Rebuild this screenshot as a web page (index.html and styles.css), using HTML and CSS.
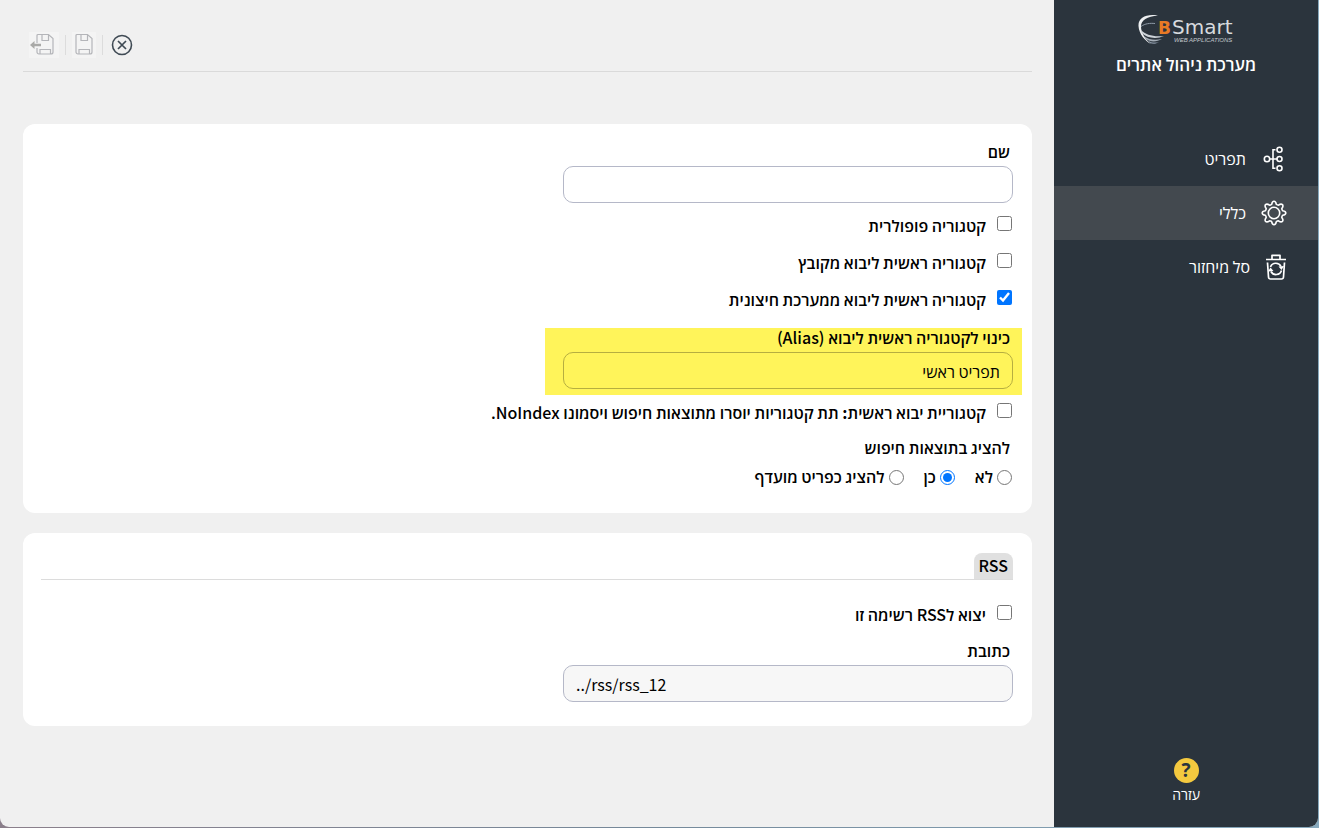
FILE: index.html
```
<!DOCTYPE html>
<html lang="he" dir="rtl">
<head>
<meta charset="utf-8">
<title>מערכת ניהול אתרים</title>
<link rel="stylesheet" href="styles.css">
</head>
<body>
<div class="window">
  <aside class="sidebar">
    <header class="brand">
      <svg class="logo" width="98" height="34" viewBox="0 0 98 34" role="img" aria-label="BSmart Web Applications">
        <path d="M21 1.500C9-.5 1 4 1.500 12 2 20 8 27 14 30 7 24 4 18 4 12.500 4 6 10 2.500 21 1.500z" fill="#eef0f2"/>
        <path d="M4 12.500c4-3 9-3.500 14-3" fill="none" stroke="#8f9ba8" stroke-width="1"/>
        <path d="M4 16c5 5 12 7 23 6-8 3.500-17 2-22.500-3z" fill="#cdd3d9"/>
        <path d="M7 22c5 4 11 4.500 18 3-6 3.500-12 3-16 0z" fill="#a5aeb8"/>
        <path d="M11 26.500c4 2.500 7 2.500 11 1.500-4 2.500-7 2-9 1z" fill="#8a96a5"/>
        <text class="logo-b" x="21" y="20">B</text>
        <text class="logo-name" x="35" y="20">Smart</text>
        <text class="logo-sub" x="37" y="28">WEB APPLICATIONS</text>
      </svg>
      <h1 class="title">מערכת ניהול אתרים</h1>
    </header>
    <nav class="nav">
      <a class="nav-item" href="#menu">
        <svg width="26" height="26" viewBox="0 0 26 26" fill="none" stroke="#fff" stroke-width="1.6"><circle cx="6" cy="13" r="2.700"/><circle cx="18.500" cy="3.700" r="2.500"/><circle cx="18.500" cy="13" r="2.500"/><circle cx="18.500" cy="22.300" r="2.500"/><path d="M8.700 13H16M14.500 3.700H12v18.600h2.500"/></svg>
        <span>תפריט</span>
      </a>
      <a class="nav-item active" href="#general">
        <svg width="26" height="26" viewBox="0 0 26 26" fill="none" stroke="#fff" stroke-width="1.6" stroke-linejoin="round"><circle cx="13" cy="13" r="5.700"/><path d="M13 1.200Q14.800 1.200 15.300 4.300Q16.200 5.200 17.500 5.200Q20 3.300 21.400 4.600Q22.700 6 20.800 8.500Q20.800 9.800 21.700 10.700Q24.800 11.200 24.800 13Q24.800 14.800 21.700 15.300Q20.800 16.200 20.800 17.500Q22.700 20 21.400 21.400Q20 22.700 17.500 20.800Q16.200 20.800 15.300 21.700Q14.800 24.800 13 24.800Q11.200 24.800 10.700 21.700Q9.800 20.800 8.500 20.800Q6 22.700 4.600 21.400Q3.300 20 5.200 17.500Q5.200 16.200 4.300 15.300Q1.200 14.800 1.200 13Q1.200 11.200 4.300 10.700Q5.200 9.800 5.200 8.500Q3.300 6 4.600 4.600Q6 3.300 8.500 5.200Q9.800 5.200 10.700 4.300Q11.200 1.200 13 1.200z"/></svg>
        <span>כללי</span>
      </a>
      <a class="nav-item" href="#recycle">
        <svg width="22" height="26" viewBox="0 0 22 26" fill="none" stroke="#fff" stroke-width="1.7" stroke-linejoin="round"><path d="M1 5.500h20M7 5V1.300h8V5M2.500 8.500l1 14.500c.1 1.300.8 2 2 2h11c1.200 0 1.900-.7 2-2l1-14.500"/><path d="M5.500 13A5.700 5.700 0 0 1 16 12.500M16.500 16.500A5.700 5.700 0 0 1 6 17.500"/><path d="M19 12l-2.500 4-3-3.500zM3 17.500l2.500-4 3 3.500z" fill="#fff" stroke="none"/></svg>
        <span>סל מיחזור</span>
      </a>
    </nav>
    <a class="help" href="#help">
      <span class="help-mark">?</span>
      <span>עזרה</span>
    </a>
  </aside>

  <main class="main">
    <div class="toolbar">
      <button class="tool close" type="button" aria-label="סגירה"><svg width="22" height="22" viewBox="0 0 22 22" fill="none" stroke="#3f4a54"><circle cx="11" cy="11" r="9.500" stroke-width="1.600"/><path d="M7 7l8 8M15 7l-8 8" stroke-width="1.700"/></svg></button>
      <span class="divider"></span>
      <button class="tool saved" type="button" disabled aria-label="שמירה"><svg width="24" height="26" viewBox="0 0 24 26" fill="none" stroke="#b4b5b9" stroke-width="1.200"><path d="M5 2.500h10.500l4.500 4v13.500a2 2 0 0 1-2 2H6a2 2 0 0 1-2-2V3.500a1 1 0 0 1 1-1zM9 2.500v6h6.500v-6M7 22v-4.500h10.500V22"/></svg></button>
      <span class="divider"></span>
      <button class="tool saved" type="button" disabled aria-label="שמירה ויציאה"><svg width="30" height="26" viewBox="0 0 30 26" fill="none" stroke="#b4b5b9" stroke-width="1.200"><path d="M8 11V3.500a1 1 0 0 1 1-1h10.500l4.500 4v13.500a2 2 0 0 1-2 2H10a2 2 0 0 1-2-2v-4M13 2.500v6h6.500v-6M11 22v-4.500h10.500V22"/><path d="M5.500 9L1 13l4.500 4v-2.700H12v-2.600H5.500z" fill="#a9a9a7" stroke="none"/></svg></button>
    </div>

    <form class="forms">
      <section class="card">
        <label class="label" for="name">שם</label>
        <input class="text" id="name" type="text">
        <div class="checks">
          <label class="check"><input type="checkbox"><span>קטגוריה פופולרית</span></label>
          <label class="check"><input type="checkbox"><span>קטגוריה ראשית ליבוא מקובץ</span></label>
          <label class="check"><input type="checkbox" checked><span>קטגוריה ראשית ליבוא ממערכת חיצונית</span></label>
        </div>
        <div class="highlight">
          <label class="label" for="alias">כינוי לקטגוריה ראשית ליבוא <bdi class="latin" dir="rtl">(Alias)</bdi></label>
          <input class="text" id="alias" type="text" value="תפריט ראשי">
        </div>
        <label class="check"><input type="checkbox"><span>קטגוריית יבוא ראשית: תת קטגוריות יוסרו מתוצאות חיפוש ויסמונו <bdi class="latin" dir="rtl">NoIndex.</bdi></span></label>
        <fieldset class="group">
          <legend class="label">להציג בתוצאות חיפוש</legend>
          <div class="radios">
            <label class="radio"><input type="radio" name="show"><span>לא</span></label>
            <label class="radio"><input type="radio" name="show" checked><span>כן</span></label>
            <label class="radio"><input type="radio" name="show"><span>להציג כפריט מועדף</span></label>
          </div>
        </fieldset>
      </section>

      <section class="card rss">
        <div class="tabs"><h2 class="tab latin">RSS</h2></div>
        <label class="check"><input type="checkbox"><span>יצוא ל<bdi class="latin">RSS</bdi> רשימה זו</span></label>
        <div class="field">
          <label class="label" for="address">כתובת</label>
          <input class="text path" id="address" type="text" dir="ltr" value="../rss/rss_12" readonly>
        </div>
      </section>
    </form>
  </main>
</div>
</body>
</html>
```
FILE: styles.css
```
* { box-sizing: border-box; }
body {
  margin: 0;
  padding: 0 0 1px;
  background: linear-gradient(90deg, #8b7f8b, #75899a 50%, #87a9bd);
  color: #000;
  font: 600 16px/18px "Noto Sans CJK SC", "Open Sans", "Noto Sans", sans-serif;
}
input, button { font: inherit; color: inherit; margin: 0; }
a { color: inherit; text-decoration: none; }
.latin { font-weight: 500; }

.window {
  display: flex;
  min-height: calc(100vh - 1px);
  margin-right: 1px;
  background: #f0f0f0;
  border-radius: 0 0 9px 9px;
  overflow: hidden;
}

.sidebar {
  flex: 0 0 264px;
  display: flex;
  flex-direction: column;
  background: #2b343d;
  color: #fff;
}
.brand {
  display: flex;
  flex-direction: column;
  align-items: center;
  padding: 14px 0 57px;
}
.logo { direction: ltr; }
.logo-b { font: bold 17px "DejaVu Sans", sans-serif; fill: #e87a25; }
.logo-name { font: 20px "DejaVu Sans", sans-serif; fill: #d7dade; }
.logo-sub { font: italic 6px "Liberation Sans", sans-serif; fill: #c3c8cd; }
.title { margin: 5px 0 0; font-size: 17px; font-weight: 600; line-height: 22px; }
.nav-item {
  display: flex;
  align-items: center;
  gap: 15px;
  height: 54px;
  padding-right: 31px;
  font-weight: 500;
}
.nav-item span { margin-bottom: 2px; }
.nav-item.active { background: #43494f; }
.help {
  display: flex;
  flex-direction: column;
  align-items: center;
  gap: 2px;
  margin: auto auto 24px;
  font-size: 14px;
  font-weight: 500;
}
.help-mark {
  width: 25px;
  height: 25px;
  border-radius: 50%;
  background: #f4c93f;
  color: #2b343d;
  font: bold 19px/25px "Open Sans", sans-serif;
  text-align: center;
}

.main { flex: 1; min-width: 0; padding: 0 22px 24px 23px; }
.toolbar {
  display: flex;
  justify-content: flex-end;
  align-items: center;
  gap: 6px;
  height: 72px;
  padding: 18px 6px 0;
  border-bottom: 1px solid #dadada;
}
.tool { display: flex; padding: 0; border: 0; background: none; }
.tool.close { padding: 0 2px; }
.tool.saved { background: #f4f4f4; }
.divider { width: 1px; height: 20px; background: #dcdcdc; }

.forms { display: flex; flex-direction: column; gap: 20px; margin-top: 52px; }
.card {
  padding: 18px 19px 21px 18px;
  background: #fff;
  border-radius: 12px;
}
.label { display: block; margin-bottom: 6px; padding: 0 3px; }
.text {
  display: block;
  width: 450px;
  max-width: 100%;
  height: 37px;
  padding: 0 12px;
  border: 1px solid #b5b8c8;
  border-radius: 10px;
  background: #fff;
  font-weight: 400;
}
.path { background: #f7f7f7; }
.checks { margin: 4px 0 10px; }
.check {
  display: flex;
  align-items: center;
  gap: 11px;
  height: 37px;
  padding-right: 1px;
}
.check input { width: 15px; height: 15px; margin-bottom: 5px; }
.check span, .radio span { margin-bottom: 2px; }
.highlight {
  width: 477px;
  max-width: 100%;
  margin: 0 -9px -1px 0;
  padding: 0 9px 6px;
  background: #fff45a;
}
.highlight .text { border-color: #b6ae40; background: transparent; }
.group { margin: 7px 0 0; padding: 0; border: 0; }
.radios { display: flex; gap: 20px; height: 30px; padding-right: 1px; }
.radio { display: flex; align-items: center; gap: 4px; }
.radio input { width: 15px; height: 15px; }

.rss { padding-top: 20px; padding-bottom: 24px; }
.tabs { display: flex; margin-bottom: 16px; border-bottom: 1px solid #dcdcdc; }
.tab {
  margin: 0;
  padding: 3px 5px 5px;
  border-radius: 8px 8px 0 0;
  background: #e0e0e0;
  font-size: 16px;
}
.field { margin-top: 8px; }
```
